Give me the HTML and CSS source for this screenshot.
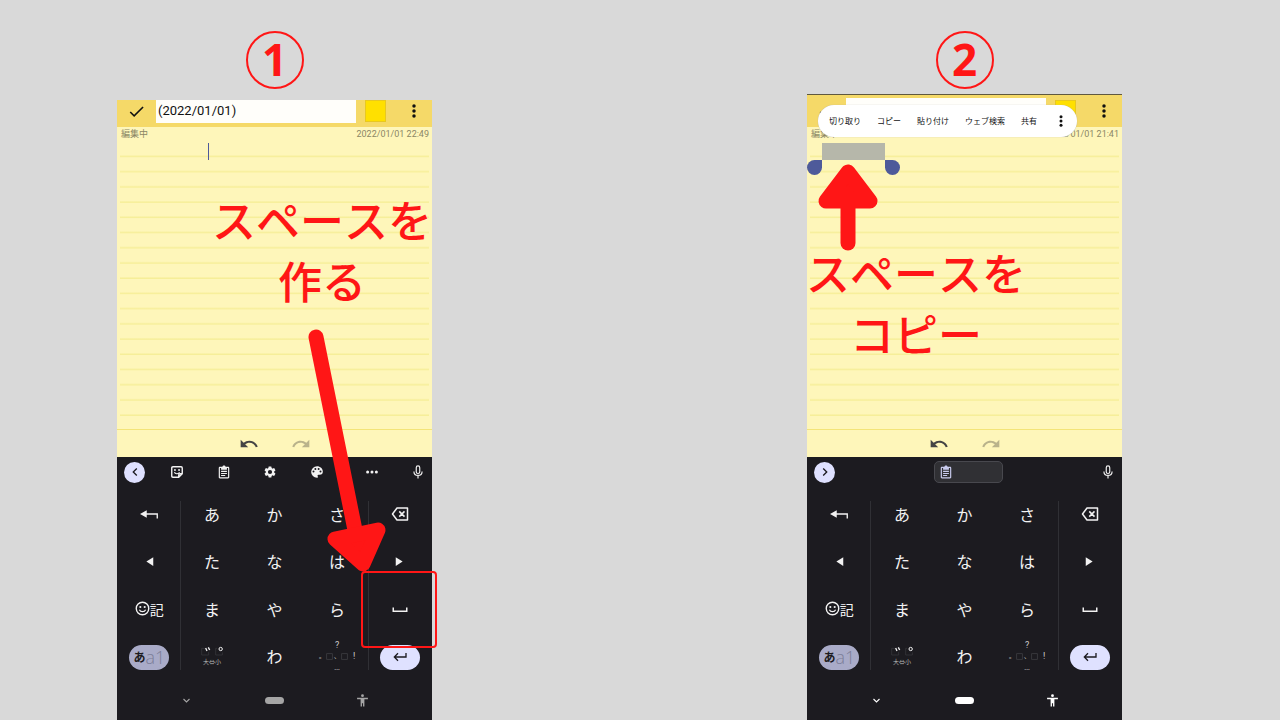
FILE: index.html
```
<!DOCTYPE html>
<html lang="ja">
<head>
  <meta charset="UTF-8" />
  <meta name="viewport" content="width=device-width, initial-scale=1.0"/>
  <title>スペースをコピーする手順</title>
  <link rel="stylesheet" href="styles.css">
</head>
<body>
  <!-- Shared icons -->
  <svg class="icon-defs" aria-hidden="true">
    <symbol id="i-check" viewBox="0 0 24 24"><path d="M9 16.2 4.8 12l-1.4 1.4L9 19 21 7l-1.4-1.4z"/></symbol>
    <symbol id="i-more" viewBox="0 0 24 24"><circle cx="12" cy="3.500" r="3"/><circle cx="12" cy="12" r="3"/><circle cx="12" cy="20.500" r="3"/></symbol>
    <symbol id="i-dots" viewBox="0 0 24 24"><circle cx="4.500" cy="12" r="2.600"/><circle cx="12" cy="12" r="2.600"/><circle cx="19.500" cy="12" r="2.600"/></symbol>
    <symbol id="i-undo" viewBox="0 0 24 24"><path d="M12.5 8c-2.65 0-5.05.99-6.9 2.6L2 7v9h9l-3.62-3.62c1.39-1.16 3.16-1.88 5.12-1.88 3.54 0 6.55 2.31 7.6 5.5l2.37-.78C21.08 11.03 17.15 8 12.5 8z"/></symbol>
    <symbol id="i-redo" viewBox="0 0 24 24"><path d="M18.4 10.6C16.55 8.99 14.15 8 11.5 8c-4.65 0-8.58 3.03-9.96 7.22L3.9 16c1.05-3.19 4.05-5.5 7.6-5.5 1.95 0 3.73.72 5.12 1.88L13 16h9V7l-3.6 3.6z"/></symbol>
    <symbol id="i-left" viewBox="0 0 24 24"><path d="M15.4 7.4 14 6l-6 6 6 6 1.4-1.4L10.8 12z"/></symbol>
    <symbol id="i-right" viewBox="0 0 24 24"><path d="M8.6 16.6 10 18l6-6-6-6-1.4 1.4 4.6 4.600z"/></symbol>
    <symbol id="i-sticker" viewBox="0 0 24 24"><path fill="none" stroke="currentColor" stroke-width="2.400" stroke-linejoin="round" d="M5 3h14q2 0 2 2v10l-6 6H5q-2 0-2-2V5q0-2 2-2zM21 15h-4q-2 0-2 2v4"/><circle cx="8.500" cy="8.500" r="1.600"/><circle cx="15.500" cy="8.500" r="1.600"/><path fill="none" stroke="currentColor" stroke-width="2" d="M7.500 12.500c1.500 3 6 3.500 9 0"/></symbol>
    <symbol id="i-clip" viewBox="0 0 24 24"><path d="M19 3h-4.180C14.400 1.840 13.300 1 12 1s-2.400.84-2.820 2H5c-1.100 0-2 .9-2 2v16c0 1.100.9 2 2 2h14c1.100 0 2-.9 2-2V5c0-1.100-.9-2-2-2zm0 18H5V5h2v3h10V5h2zM7 10h10v2H7zm0 3.500h10v2H7zM7 17h7v2H7z"/></symbol>
    <symbol id="i-gear" viewBox="0 0 24 24"><path fill-rule="evenodd" d="M19.140 12.940c.04-.3.060-.61.060-.94s-.020-.64-.070-.94l2.030-1.580c.18-.14.230-.41.120-.61l-1.920-3.320c-.12-.22-.37-.29-.59-.22l-2.390.96c-.5-.38-1.030-.7-1.620-.94l-.36-2.540A.48.48 0 0 0 13.920 2.400h-3.840c-.24 0-.43.17-.47.41l-.36 2.540c-.59.24-1.130.57-1.620.94l-2.390-.96c-.22-.08-.47 0-.59.22L2.740 8.870c-.12.210-.08.470.12.610l2.030 1.580c-.05.300-.09.630-.09.940s.02.640.07.940l-2.030 1.580c-.18.140-.23.410-.12.610l1.920 3.320c.12.220.37.290.59.220l2.390-.96c.5.380 1.030.700 1.620.940l.36 2.540c.05.240.24.410.48.410h3.840c.24 0 .44-.17.47-.41l.36-2.540c.59-.24 1.130-.56 1.620-.94l2.390.96c.22.080.47 0 .59-.22l1.920-3.320c.12-.22.070-.47-.12-.61zM12 15.600a3.600 3.600 0 1 1 0-7.200 3.600 3.600 0 0 1 0 7.200z"/></symbol>
    <symbol id="i-palette" viewBox="0 0 24 24"><path fill-rule="evenodd" d="M12 2a10 10 0 0 0 0 20 1.700 1.700 0 0 0 1.200-2.800 1.700 1.700 0 0 1 1.300-2.700h2A5.500 5.500 0 0 0 22 11c0-5-4.500-9-10-9zM6 13a1.700 1.700 0 1 1 0-3.400A1.700 1.700 0 0 1 6 13zm3.200-4.500a1.700 1.700 0 1 1 0-3.400 1.700 1.700 0 0 1 0 3.400zm5.600 0a1.700 1.700 0 1 1 0-3.400 1.700 1.700 0 0 1 0 3.400zM18 13a1.700 1.700 0 1 1 0-3.400 1.700 1.700 0 0 1 0 3.400z"/></symbol>
    <symbol id="i-mic" viewBox="0 0 24 24"><rect x="9" y="1.500" width="6" height="13" rx="3" fill="none" stroke="currentColor" stroke-width="2"/><path fill="none" stroke="currentColor" stroke-width="2" d="M5 11c0 9 14 9 14 0M12 18v5"/></symbol>
    <symbol id="i-back" viewBox="0 0 24 24"><path d="M0 12l9-5v10z"/><path fill="none" stroke="currentColor" stroke-width="1.800" d="M8 12h15v6"/></symbol>
    <symbol id="i-delete" viewBox="0 0 24 24"><path fill="none" stroke="currentColor" stroke-width="2" stroke-linejoin="round" d="M8 4h14v16H8l-6-8zM11 8.500l7 7M18 8.500l-7 7"/></symbol>
    <symbol id="i-prev" viewBox="0 0 24 24"><path d="M18 5v14L7 12z"/></symbol>
    <symbol id="i-next" viewBox="0 0 24 24"><path d="M6 5v14l11-7z"/></symbol>
    <symbol id="i-smile" viewBox="0 0 24 24"><circle cx="12" cy="12" r="10" fill="none" stroke="currentColor" stroke-width="2.200"/><circle cx="8.500" cy="9.500" r="1.700"/><circle cx="15.500" cy="9.500" r="1.700"/><path fill="none" stroke="currentColor" stroke-width="2" d="M7 14c2 4 8 4 10 0"/></symbol>
    <symbol id="i-space" viewBox="0 0 24 24"><path fill="none" stroke="currentColor" stroke-width="2" d="M3 10v5h18v-5"/></symbol>
    <symbol id="i-enter" viewBox="0 0 24 24"><path fill="none" stroke="currentColor" stroke-width="2" d="M21 6v6H4M9 6.500 3.500 12 9 17.500"/></symbol>
    <symbol id="i-down" viewBox="0 0 24 24"><path fill="none" stroke="currentColor" stroke-width="3" d="m4 8 8 8 8-8"/></symbol>
    <symbol id="i-person" viewBox="0 0 24 24"><circle cx="12" cy="3" r="2.600"/><path d="M22 9.500h-6.500V23h-2.500v-6h-2v6H8.500V9.500H2V6.800h20z"/></symbol>
    <symbol id="i-marks" viewBox="0 0 66 28"><path fill="none" stroke="#3b3b40" stroke-width="2" d="M13 6H2v20h21V17M48 6h-4v20h20V18"/><path fill="none" stroke="currentColor" stroke-width="4" d="m14 5 4 9M22 3l4 8"/><circle cx="59" cy="8" r="5" fill="none" stroke="currentColor" stroke-width="3"/></symbol>
    <symbol id="i-box" viewBox="0 0 24 24"><path fill="none" stroke="#3b3b40" stroke-width="3" d="M2 2h20v20H2z"/></symbol>
  </svg>

  <main class="steps">
    <section class="step step-one">
      <h2 class="number">1</h2>
      <div class="phone">
        <header class="toolbar">
          <button class="check" aria-label="完了"><svg><use href="#i-check"/></svg></button>
          <input type="text" class="title" value="(2022/01/01)" aria-label="タイトル">
          <button class="swatch" aria-label="色"></button>
          <button class="menu" aria-label="メニュー"><svg><use href="#i-more"/></svg></button>
        </header>
        <div class="paper">
          <div class="status"><span>編集中</span><time>2022/01/01 22:49</time></div>
          <textarea class="note" aria-label="メモ"></textarea>
          <span class="caret"></span>
          <div class="history">
            <button aria-label="元に戻す"><svg><use href="#i-undo"/></svg></button>
            <button aria-label="やり直す" disabled><svg><use href="#i-redo"/></svg></button>
          </div>
        </div>
        <div class="keyboard">
          <div class="tools tools-full">
            <button class="round" aria-label="閉じる"><svg><use href="#i-left"/></svg></button>
            <button aria-label="ステッカー"><svg><use href="#i-sticker"/></svg></button>
            <button aria-label="クリップボード"><svg><use href="#i-clip"/></svg></button>
            <button aria-label="設定"><svg><use href="#i-gear"/></svg></button>
            <button aria-label="テーマ"><svg><use href="#i-palette"/></svg></button>
            <button aria-label="その他"><svg><use href="#i-dots"/></svg></button>
            <button aria-label="音声入力"><svg><use href="#i-mic"/></svg></button>
          </div>
          <div class="keys">
            <button aria-label="戻す"><svg class="wide"><use href="#i-back"/></svg></button>
            <button>あ</button><button>か</button><button>さ</button>
            <button aria-label="削除"><svg class="wide"><use href="#i-delete"/></svg></button>
            <button aria-label="左"><svg><use href="#i-prev"/></svg></button>
            <button>た</button><button>な</button><button>は</button>
            <button aria-label="右"><svg><use href="#i-next"/></svg></button>
            <button class="symbols"><svg><use href="#i-smile"/></svg>記</button>
            <button>ま</button><button>や</button><button>ら</button>
            <button aria-label="空白"><svg class="wide"><use href="#i-space"/></svg></button>
            <button class="pill lang"><b>あ</b><span>a1</span></button>
            <button class="marks"><svg><use href="#i-marks"/></svg><small>大⇔小</small></button>
            <button>わ</button>
            <button class="punct"><span>?</span><span class="mid"><i>。</i><svg><use href="#i-box"/></svg><i>、</i><svg><use href="#i-box"/></svg><b>!</b></span><span>…</span></button>
            <button class="pill enter" aria-label="改行"><svg><use href="#i-enter"/></svg></button>
          </div>
          <nav class="nav">
            <button aria-label="キーボードを閉じる"><svg class="down"><use href="#i-down"/></svg></button>
            <button aria-label="ホーム"><span class="home"></span></button>
            <button aria-label="ユーザー補助"><svg><use href="#i-person"/></svg></button>
          </nav>
        </div>
        <p class="callout">スペースを<br>作る</p>
        <svg class="arrow" viewBox="0 0 64 246" aria-hidden="true">
          <path class="shaft" d="M11 11 52 214"/>
          <path class="head" d="M30 213 73 204 58 238z"/>
        </svg>
        <span class="target"></span>
      </div>
    </section>

    <section class="step step-two">
      <h2 class="number">2</h2>
      <div class="phone">
        <header class="toolbar">
          <button class="check" aria-label="完了"><svg><use href="#i-check"/></svg></button>
          <input type="text" class="title" aria-label="タイトル">
          <button class="swatch" aria-label="色"></button>
          <button class="menu" aria-label="メニュー"><svg><use href="#i-more"/></svg></button>
        </header>
        <div class="paper">
          <div class="status"><span>編集中</span><time>2022/01/01 21:41</time></div>
          <textarea class="note" aria-label="メモ"></textarea>
          <span class="selection"></span>
          <div class="history">
            <button aria-label="元に戻す"><svg><use href="#i-undo"/></svg></button>
            <button aria-label="やり直す" disabled><svg><use href="#i-redo"/></svg></button>
          </div>
        </div>
        <div class="keyboard">
          <div class="tools tools-short">
            <button class="round" aria-label="開く"><svg><use href="#i-right"/></svg></button>
            <button class="chip" aria-label="貼り付け候補"><svg><use href="#i-clip"/></svg></button>
            <button aria-label="音声入力"><svg><use href="#i-mic"/></svg></button>
          </div>
          <div class="keys">
            <button aria-label="戻す"><svg class="wide"><use href="#i-back"/></svg></button>
            <button>あ</button><button>か</button><button>さ</button>
            <button aria-label="削除"><svg class="wide"><use href="#i-delete"/></svg></button>
            <button aria-label="左"><svg><use href="#i-prev"/></svg></button>
            <button>た</button><button>な</button><button>は</button>
            <button aria-label="右"><svg><use href="#i-next"/></svg></button>
            <button class="symbols"><svg><use href="#i-smile"/></svg>記</button>
            <button>ま</button><button>や</button><button>ら</button>
            <button aria-label="空白"><svg class="wide"><use href="#i-space"/></svg></button>
            <button class="pill lang"><b>あ</b><span>a1</span></button>
            <button class="marks"><svg><use href="#i-marks"/></svg><small>大⇔小</small></button>
            <button>わ</button>
            <button class="punct"><span>?</span><span class="mid"><i>。</i><svg><use href="#i-box"/></svg><i>、</i><svg><use href="#i-box"/></svg><b>!</b></span><span>…</span></button>
            <button class="pill enter" aria-label="改行"><svg><use href="#i-enter"/></svg></button>
          </div>
          <nav class="nav">
            <button aria-label="キーボードを閉じる"><svg class="down"><use href="#i-down"/></svg></button>
            <button aria-label="ホーム"><span class="home"></span></button>
            <button aria-label="ユーザー補助"><svg><use href="#i-person"/></svg></button>
          </nav>
        </div>
        <div class="popup">
          <button>切り取り</button>
          <button>コピー</button>
          <button>貼り付け</button>
          <button>ウェブ検索</button>
          <button>共有</button>
          <button class="popup-more" aria-label="その他"><svg><use href="#i-more"/></svg></button>
        </div>
        <p class="callout">スペースを<br>コピー</p>
        <svg class="arrow" viewBox="0 0 60 86" aria-hidden="true">
          <path class="shaft" d="M30 30v49"/>
          <path class="head" d="M8 37h44L30 8z"/>
        </svg>
      </div>
    </section>
  </main>
</body>
</html>
```
FILE: styles.css
```
* {
  box-sizing: border-box;
}

body {
  margin: 0;
  background-color: #d9d9d9;
  font-family: Roboto, "Noto Sans CJK JP", sans-serif;
}

button {
  display: flex;
  align-items: center;
  justify-content: center;
  padding: 0;
  border: none;
  background: none;
  color: inherit;
  font: inherit;
}

svg {
  display: block;
  flex: none;
  fill: currentColor;
}

.icon-defs {
  position: absolute;
  width: 0;
  height: 0;
}

/* Two steps side by side */
.steps {
  display: grid;
  grid-template-columns: 117fr 315fr 375fr 315fr 158fr;
  min-height: 100vh;
  padding-top: 31px;
}

.step {
  display: flex;
  flex-direction: column;
}

.step-one {
  grid-column: 2;
}

.step-two {
  grid-column: 4;
}

.number {
  width: 58px;
  height: 58px;
  margin: 0 auto;
  border: 2px solid #ff1616;
  border-radius: 50%;
  color: #ff1616;
  font: bold 44px/52px "Open Sans", sans-serif;
  text-align: center;
}

.phone {
  position: relative;
  flex: 1;
  display: flex;
  flex-direction: column;
  margin-top: 11px;
}

.step-two .phone {
  margin-top: 5px;
  border-top: 1px solid #5f583f;
  border-bottom: 1px solid #55555a;
}

/* Note app */
.toolbar {
  display: flex;
  align-items: flex-end;
  gap: 9px;
  height: 27px;
  overflow: hidden;
  background-color: #f5d968;
  color: #111;
}

.step-two .toolbar {
  height: 32px;
}

.check {
  width: 39px;
  height: 32px;
  margin-right: -9px;
}

.check svg {
  width: 19px;
  height: 19px;
}

.title {
  flex: 1;
  min-width: 0;
  height: 24px;
  margin-bottom: 4px;
  padding: 0 2px;
  border: none;
  background-color: #fffefa;
  color: #111;
  font: 13px/24px Roboto, sans-serif;
}

.step-two .title {
  height: 25px;
}

.swatch {
  width: 21px;
  height: 22px;
  margin-bottom: 5px;
  border: 1px solid #e8c820;
  background-color: #ffe000;
}

.menu {
  width: 37px;
  height: 32px;
}

.menu svg {
  width: 14px;
  height: 14px;
}

.paper {
  position: relative;
  background-color: #fef6ba;
}

.status {
  display: flex;
  justify-content: space-between;
  height: 15px;
  padding: 0 3px 0 4px;
  color: #8b8665;
  font-size: 9px;
  line-height: 14px;
}

.note {
  display: block;
  width: calc(100% - 6px);
  height: 274px;
  margin: 0 3px;
  padding: 0;
  border: none;
  resize: none;
  background: linear-gradient(to top, #f6ee98 1px, transparent 2px);
  background-size: 100% 15px;
  background-repeat: round;
}

.caret {
  position: absolute;
  top: 16px;
  left: 91px;
  width: 1px;
  height: 17px;
  background-color: #4e5a9a;
}

.selection {
  position: absolute;
  top: 16px;
  left: 15px;
  width: 63px;
  height: 17px;
  background-color: #b6b7aa;
}

/* Drag handles of the selection */
.selection:before,
.selection:after {
  position: absolute;
  content: "";
  top: 17px;
  width: 15px;
  height: 15px;
  background-color: #4e5a9a;
}

.selection:before {
  right: 63px;
  border-radius: 50% 0 50% 50%;
}

.selection:after {
  left: 63px;
  border-radius: 0 50% 50% 50%;
}

.history {
  display: flex;
  justify-content: center;
  gap: 32px;
  height: 28px;
  margin-top: 13px;
  border-top: 1px solid #f3e478;
  color: #444;
}

.history svg {
  width: 20px;
  height: 20px;
}

.history button:disabled {
  color: #b9b38b;
}

/* Keyboard */
.keyboard {
  flex: 1;
  background-color: #1c1b20;
  color: #f2f2f2;
}

.tools {
  height: 34px;
  padding-bottom: 4px;
  align-items: center;
}

.tools svg {
  width: 14px;
  height: 14px;
}

.tools .round svg {
  width: 16px;
  height: 16px;
}

.tools-full {
  display: grid;
  grid-template-columns: 37fr 46fr 47fr 46fr 47fr 63fr 29fr;
}

.tools-short {
  display: flex;
  justify-content: space-between;
  padding-right: 7px;
}

.tools .round {
  width: 21px;
  height: 21px;
  margin-left: 7px;
  border-radius: 50%;
  background-color: #dfe1ff;
  color: #1c1b20;
}

.chip {
  justify-content: flex-start;
  width: 69px;
  height: 22px;
  padding-left: 4px;
  border: 1px solid #48484e;
  border-radius: 5px;
  background-color: #303034;
  color: #c8caec;
}

.keys {
  position: relative;
  display: grid;
  grid-template-columns: repeat(5, 1fr);
  grid-auto-rows: 1fr;
  height: 190px;
  padding: 0 1px;
  font: 16px/20px "Noto Sans CJK JP", sans-serif;
}

.keys button {
  padding-bottom: 2px;
}

.keys:before {
  position: absolute;
  content: "";
  top: 10px;
  bottom: 11px;
  left: 20%;
  right: 20%;
  border: solid #303035;
  border-width: 0 1px;
  pointer-events: none;
}

.keys svg {
  width: 15px;
  height: 15px;
}

.keys .wide {
  width: 18px;
  height: 18px;
}

.keys .symbols {
  font-size: 14px;
}

.keys .pill {
  place-self: center;
  width: 40px;
  height: 25px;
  padding: 0;
  border-radius: 13px;
}

.lang {
  background-color: #a9abc8;
  color: #1c1b20;
}

.lang b {
  font-size: 12px;
}

.lang span {
  color: #7c7e98;
  font: 300 18px/20px "Open Sans", "Noto Sans CJK JP", sans-serif;
}

.enter {
  background-color: #dfe1ff;
  color: #1c1b20;
}

.keys .enter svg {
  width: 16px;
  height: 16px;
}

.keys .marks {
  flex-direction: column;
  gap: 2px;
}

.keys .marks svg {
  width: 22px;
  height: 10px;
}

.marks small {
  color: #bbb;
  font-size: 6px;
  line-height: 8px;
}

.keys .punct {
  flex-direction: column;
  color: #ccc;
  font: 9px/11px Roboto, "Noto Sans CJK JP", sans-serif;
}

.punct .mid {
  display: flex;
  align-items: center;
  gap: 1px;
  height: 11px;
}

.punct i {
  width: 6px;
  font: 6px/10px "Noto Sans CJK JP", sans-serif;
}

.punct b {
  margin-left: 4px;
  font-weight: normal;
}

.keys .punct svg {
  width: 7px;
  height: 7px;
}

.nav {
  display: grid;
  grid-template-columns: repeat(3, 28%);
  justify-content: center;
  height: 39px;
  color: #a5a5a5;
}

.step-two .nav {
  color: #fff;
}

.nav svg {
  width: 13px;
  height: 13px;
}

.nav .down {
  width: 9px;
  height: 9px;
}

.home {
  width: 19px;
  height: 7px;
  border-radius: 4px;
  background-color: currentColor;
}

/* Text selection menu */
.popup {
  position: absolute;
  top: 10px;
  left: 11px;
  display: flex;
  align-items: center;
  gap: 16px;
  width: 259px;
  height: 32px;
  padding-left: 11px;
  border-radius: 16px;
  background-color: #fff;
  box-shadow: 0 0 1px #aaa;
  color: #111;
  font: 8px/12px "Noto Sans CJK JP", sans-serif;
  white-space: nowrap;
}

.popup-more {
  width: 16px;
}

.popup-more svg {
  width: 12px;
  height: 12px;
}

/* Red annotations */
.callout {
  position: absolute;
  top: 89px;
  left: 95px;
  width: 220px;
  margin: 0;
  color: #ff1616;
  font: 500 44px/61px "Noto Sans CJK JP", sans-serif;
  font-kerning: none;
  text-align: center;
  white-space: nowrap;
}

.step-two .callout {
  top: 147px;
  left: -1px;
}

.arrow {
  position: absolute;
  top: 226px;
  left: 188px;
  width: 64px;
  height: 246px;
  overflow: visible;
  color: #ff1616;
}

.step-two .arrow {
  top: 69px;
  left: 11px;
  width: 60px;
  height: 86px;
}

.shaft,
.head {
  stroke: #ff1616;
  stroke-width: 15px;
  stroke-linecap: round;
  stroke-linejoin: round;
}

.target {
  position: absolute;
  top: 471px;
  left: 244px;
  width: 76px;
  height: 77px;
  border: 2px solid #ff1616;
  border-radius: 4px;
}
```
